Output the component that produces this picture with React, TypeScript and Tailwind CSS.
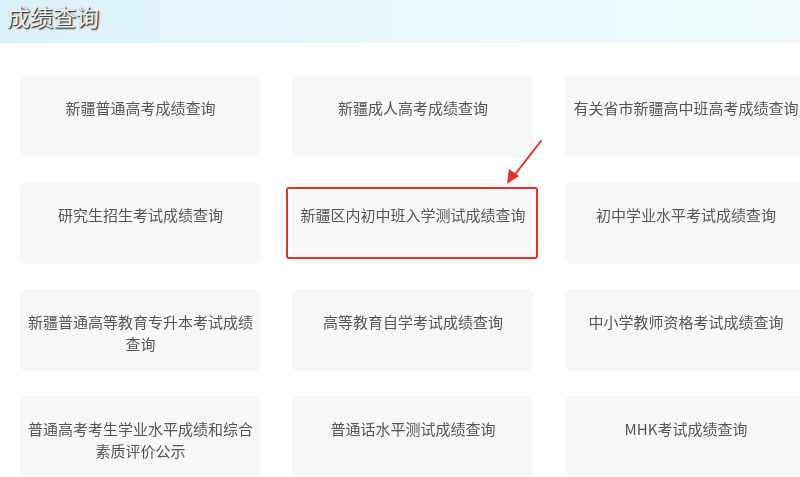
const ITEMS: string[] = [
  "新疆普通高考成绩查询",
  "新疆成人高考成绩查询",
  "有关省市新疆高中班高考成绩查询",
  "研究生招生考试成绩查询",
  "新疆区内初中班入学测试成绩查询",
  "初中学业水平考试成绩查询",
  "新疆普通高等教育专升本考试成绩查询",
  "高等教育自学考试成绩查询",
  "中小学教师资格考试成绩查询",
  "普通高考考生学业水平成绩和综合素质评价公示",
  "普通话水平测试成绩查询",
  "MHK考试成绩查询",
];

const FONT = "font-['Noto_Sans_CJK_SC',sans-serif]";

function ScoreCard({ label, marked }: { label: string; marked?: boolean }) {
  return (
    <div className="relative h-[82px] rounded-md bg-[#f6f7f9] px-[7px] pt-[22px] text-center text-[15px] leading-[22px] text-[#555]">
      {label}
      {marked && (
        // red highlight box drawn over the card
        <div className="pointer-events-none absolute left-[-6px] right-[-4px] top-[5px] bottom-[5px] rounded-[3px] border-2 border-[#e8302a]" />
      )}
    </div>
  );
}

export default function App() {
  return (
    <div className={`relative h-[477px] w-[800px] overflow-hidden bg-white antialiased ${FONT}`}>
      <div className="flex h-[43px] items-start bg-gradient-to-r from-[#dbf2f9] via-[#e8f8fc] to-[#f1fbfd] pl-[7px] pt-[1px]">
        <h2 className="text-[23px] leading-[30px] text-[#f2f2f2] [text-shadow:1px_1px_1px_#333,1px_1px_2px_#555]">
          成绩查询
        </h2>
      </div>
      <div className="grid grid-cols-[241px_242px_242px] gap-x-[31px] gap-y-[25px] pl-[20px] pt-[32px] [will-change:transform]">
        {ITEMS.map((item, i) => (
          <ScoreCard key={item} label={item} marked={i === 4} />
        ))}
      </div>
      {/* arrow pointing to the highlighted card */}
      <svg className="absolute left-0 top-0" width="800" height="477" viewBox="0 0 800 477">
        <line x1="541" y1="141" x2="513" y2="177" stroke="#e8302a" strokeWidth="2" strokeLinecap="round" />
        <polygon points="507,184 509,169 519,176" fill="#e8302a" />
      </svg>
    </div>
  );
}
